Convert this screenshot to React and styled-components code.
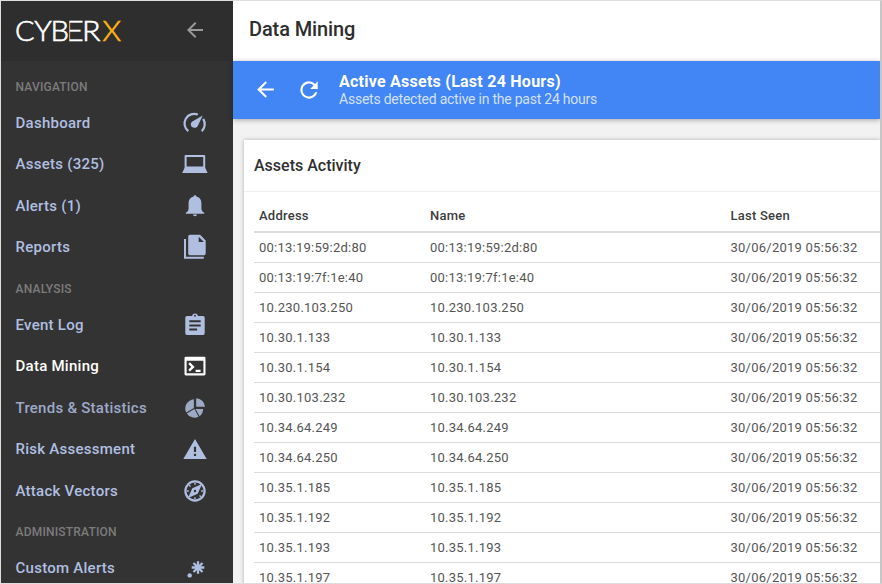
import React from "react";
import styled, { createGlobalStyle } from "styled-components";

const GlobalStyle = createGlobalStyle`
  * { box-sizing: border-box; }
  html, body { margin: 0; padding: 0; overflow: hidden; }
  body { font-family: Roboto, "Liberation Sans", sans-serif; }
`;

const Frame = styled.div`
  display: flex;
  width: 882px;
  height: 584px;
  overflow: hidden;
  border: 1px solid #dedede;
  border-right: 2px solid #c6c6c6;
  background: #f2f2f2;
`;

const Sidebar = styled.aside`
  flex: none;
  width: 232px;
  background: #333333;
  overflow: hidden;
`;

const Brand = styled.div`
  display: flex;
  align-items: center;
  justify-content: space-between;
  height: 60px;
  padding: 0 26px 2px 14px;
  background: #2e2e2e;
`;

const SectionTitle = styled.div`
  height: ${(p) => (p.$first ? 41.4 : 36.4)}px;
  padding: ${(p) => (p.$first ? 18 : 12.8)}px 0 0 14.5px;
  color: #7c7c7c;
  font-size: 12px;
  font-weight: 500;
  line-height: 16px;
  letter-spacing: 0.2px;
`;

const NavItem = styled.div`
  display: flex;
  align-items: center;
  justify-content: space-between;
  height: 41.4px;
  padding: 0 25px 0 14.5px;
  color: ${(p) => (p.$active ? "#ffffff" : "#b0bfe0")};
  opacity: ${(p) => (p.$dim ? 0.85 : 1)};
  font-size: 15px;
  font-weight: 500;
  letter-spacing: 0.26px;
  white-space: nowrap;
`;

const NavIcon = styled.svg`
  display: block;
  flex: none;
  width: 26px;
  height: 26px;
  fill: currentColor;
`;

const ActionIcon = styled.svg`
  display: block;
  flex: none;
  width: ${(p) => p.$size}px;
  height: ${(p) => p.$size}px;
  margin-bottom: ${(p) => p.$lift || 0}px;
  fill: ${(p) => p.$color || "#ffffff"};
`;

const Logo = styled.svg`
  display: block;
  width: 112px;
  height: 40px;
  font-family: Lato, sans-serif;
  font-size: 28px;
  font-weight: 300;
`;

const Main = styled.main`
  flex: 1;
  min-width: 0;
  display: flex;
  flex-direction: column;
`;

const PageHeader = styled.header`
  flex: none;
  height: 60px;
  padding: 0 16px;
  background: #ffffff;
  color: #2e2e2e;
  font-size: 20px;
  font-weight: 500;
  line-height: 57px;
  letter-spacing: -0.12px;
`;

const ReportBar = styled.div`
  flex: none;
  display: flex;
  align-items: center;
  height: 58px;
  padding-left: 20px;
  background: #4285f4;
  box-shadow: 0 1px 5px rgba(0, 0, 0, 0.32);
  color: #ffffff;
`;

const ReportText = styled.div`
  margin-left: 17px;
`;

const ReportTitle = styled.div`
  font-size: 16px;
  font-weight: 700;
  line-height: 18px;
  letter-spacing: 0.25px;
`;

const ReportSubtitle = styled.div`
  color: #d2e1fc;
  font-size: 14px;
  line-height: 16px;
  letter-spacing: -0.23px;
`;

const Gap = styled.div`
  flex: none;
  width: ${(p) => p.$width}px;
`;

const Content = styled.section`
  flex: 1;
  min-height: 0;
  padding: 20.5px 0 0 10.5px;
  overflow: hidden;
`;

const Card = styled.div`
  height: 600px;
  background: #ffffff;
  box-shadow: 0 0 4px rgba(0, 0, 0, 0.28);
`;

const CardTitle = styled.h2`
  height: 52.5px;
  margin: 0;
  padding-left: 10.5px;
  border-bottom: 1px solid #eeeeee;
  color: #2f2f2f;
  font-size: 16px;
  font-weight: 500;
  line-height: 52px;
`;

const Table = styled.div`
  margin-left: 10.5px;
  padding-top: 9px;
`;

const Row = styled.div`
  display: grid;
  grid-template-columns: 171px 300.5px 1fr;
  height: 30px;
  padding-left: 5px;
  border-bottom: 1px solid #dcdcdc;
  color: #555555;
  font-size: 13px;
  line-height: 29px;
  letter-spacing: 0.24px;
`;

const HeaderRow = styled(Row)`
  height: 32px;
  border-bottom: 2px solid #dcdcdc;
  color: #3c3c3c;
  font-weight: 500;
  line-height: 30px;
`;

const ICONS = {
  gauge: (
    <>
      <path d="M15.8 4.6A9.6 9.6 0 0 0 6.3 21.1M21.2 8.9A9.6 9.6 0 0 1 19.7 21.1" fill="none" stroke="currentColor" strokeWidth="2.2" />
      <path d="M20.7 5.4 10.4 11.5C7.6 13.4 8.6 17.8 12.4 17.8c1.8 0 3-.9 3.6-2.3z" />
    </>
  ),
  laptop: (
    <path fillRule="evenodd" d="M3.6 4h18.6q1 0 1 1v11.8L25.6 22H.2L2.6 16.8V5q0-1 1-1zM4.6 6v9.5h16.6V6z" />
  ),
  bell: (
    <path d="M13 2.2c.9 0 1.4.6 1.4 1.4 3.6.8 5 3.6 5 6.8v5.2c0 2 1.1 3.2 2.8 4.2v1H3.8v-1c1.7-1 2.8-2.2 2.8-4.2v-5.2c0-3.2 1.4-6 5-6.8 0-.8.5-1.4 1.4-1.4zM11 21.6h4c0 2.1-4 2.1-4 0z" />
  ),
  files: (
    <>
      <path d="M3 5v18.7h18.8" fill="none" stroke="currentColor" strokeWidth="2" />
      <path fillRule="evenodd" d="M8 .8h10.1l5.6 5.8v12.9q0 1.8-1.8 1.8H8q-1.8 0-1.8-1.8V2.6Q6.2.8 8 .8zM16.7 2.7v5.4h5.2z" />
    </>
  ),
  clipboard: (
    <path fillRule="evenodd" d="M5 3.9h5a3.1 3.1 0 0 1 6 0h5q1.7 0 1.7 1.7v15.6q0 1.7-1.7 1.7H5q-1.7 0-1.7-1.7V5.6Q3.3 3.9 5 3.9zM13 2.8a.9.9 0 1 0 0 1.9.9.9 0 0 0 0-1.9zM7.3 8.2v2h11.4v-2zM7.3 12.4v2h11.4v-2zM7.3 16.5v2h7.8v-2z" />
  ),
  terminal: (
    <>
      <path fillRule="evenodd" d="M3.8 3.8h18.4q1.3 0 1.3 1.3v16q0 1.3-1.3 1.3H3.8q-1.3 0-1.3-1.3v-16q0-1.3 1.3-1.3zM4.6 7.7v12.5h16.8V7.7z" />
      <path d="M7.1 10.2 11 13.9l-3.9 3.7M13.6 17.9h5" fill="none" stroke="currentColor" strokeWidth="2.3" />
    </>
  ),
  pie: (
    <>
      <path d="M14.2 3.2a9.5 9.5 0 0 1 8.9 8.5h-8.9z" />
      <path d="M11.9 4.3v8.8L4.2 17.5A9.2 9.2 0 0 1 11.9 4.3z" />
      <path d="m12.4 14.1 4.2 7.7a9.3 9.3 0 0 1-11.8-3.3z" />
      <path d="M13.5 13.9h7.6a9.2 9.2 0 0 1-3.5 7.3z" />
    </>
  ),
  warning: <path fillRule="evenodd" d="M13 3.1 24.7 22.9H1.3zM11.9 10.8v5.3h2.2v-5.3zM11.9 17.8v2.2h2.2v-2.2z" />,
  compass: (
    <>
      <circle cx="13" cy="13" r="9.6" fill="none" stroke="currentColor" strokeWidth="2.2" />
      <path fillRule="evenodd" d="M20 6 15.7 15.7 6 20 10.3 10.3zM13 11.8a1.2 1.2 0 1 0 0 2.4 1.2 1.2 0 0 0 0-2.4z" />
      <path d="M13 4.7v2M13 19.3v2M4.8 13h2M19.2 13h2M7.2 7.2l1.3 1.3M17.5 17.5l1.3 1.3" fill="none" stroke="currentColor" strokeWidth="1.4" />
    </>
  ),
  spark: (
    <>
      <path d="M16 6.2v12.6M9.7 12.5h12.6M11.5 8l9 9M20.5 8l-9 9" fill="none" stroke="currentColor" strokeWidth="2.3" />
      <circle cx="7.7" cy="20.4" r="2.2" />
    </>
  ),
};

const SECTIONS = [
  {
    title: "NAVIGATION",
    items: [
      { label: "Dashboard", icon: "gauge" },
      { label: "Assets (325)", icon: "laptop" },
      { label: "Alerts (1)", icon: "bell" },
      { label: "Reports", icon: "files" },
    ],
  },
  {
    title: "ANALYSIS",
    items: [
      { label: "Event Log", icon: "clipboard" },
      { label: "Data Mining", icon: "terminal", active: true },
      { label: "Trends & Statistics", icon: "pie", dim: true },
      { label: "Risk Assessment", icon: "warning" },
      { label: "Attack Vectors", icon: "compass" },
    ],
  },
  { title: "ADMINISTRATION", items: [{ label: "Custom Alerts", icon: "spark" }] },
];

const ADDRESSES = [
  "00:13:19:59:2d:80",
  "00:13:19:7f:1e:40",
  "10.230.103.250",
  "10.30.1.133",
  "10.30.1.154",
  "10.30.103.232",
  "10.34.64.249",
  "10.34.64.250",
  "10.35.1.185",
  "10.35.1.192",
  "10.35.1.193",
  "10.35.1.197",
];

const ARROW = "M20 11H7.83l5.59-5.59L12 4l-8 8 8 8 1.41-1.41L7.83 13H20z";
const REFRESH =
  "M17.65 6.35A7.96 7.96 0 0 0 12 4a8 8 0 1 0 7.73 10h-2.08A6 6 0 1 1 12 6c1.66 0 3.14.69 4.22 1.78L13 11h7V4z";

function CyberLogo() {
  return (
    <Logo viewBox="15 10 112 40">
      <g fill="#ffffff" stroke="#ffffff" strokeWidth="0.6">
        <text y="40.8">
          <tspan x="15" textLength="19.5" lengthAdjust="spacingAndGlyphs">C</tspan>
          <tspan x="34.3" textLength="17.5" lengthAdjust="spacingAndGlyphs">Y</tspan>
          <tspan x="50.5" textLength="18.5" lengthAdjust="spacingAndGlyphs">B</tspan>
        </text>
        <text x="82" y="40.8" textLength="18.5" lengthAdjust="spacingAndGlyphs">R</text>
        <svg x="69.4" y="10" width="13.4" height="40" viewBox="69.4 10 13.4 40">
          <text x="64" y="40.8" textLength="20" lengthAdjust="spacingAndGlyphs">E</text>
        </svg>
      </g>
      <text x="102.5" y="40.8" textLength="18.5" lengthAdjust="spacingAndGlyphs" fill="#fbb116" stroke="#fbb116" strokeWidth="0.7">X</text>
    </Logo>
  );
}

export default function App() {
  return (
    <>
      <GlobalStyle />
      <Frame>
        <Sidebar>
          <Brand>
            <CyberLogo />
            <ActionIcon viewBox="0 0 24 24" $size={24} $color="#999999">
              <path d={ARROW} />
            </ActionIcon>
          </Brand>
          {SECTIONS.map((section, i) => (
            <React.Fragment key={section.title}>
              <SectionTitle $first={i === 0}>{section.title}</SectionTitle>
              {section.items.map((item) => (
                <NavItem key={item.label} $active={item.active} $dim={item.dim}>
                  {item.label}
                  <NavIcon viewBox="0 0 26 26">{ICONS[item.icon]}</NavIcon>
                </NavItem>
              ))}
            </React.Fragment>
          ))}
        </Sidebar>
        <Main>
          <PageHeader>Data Mining</PageHeader>
          <ReportBar>
            <ActionIcon viewBox="0 0 24 24" $size={25} $lift={2}>
              <path d={ARROW} />
            </ActionIcon>
            <Gap $width={18} />
            <ActionIcon viewBox="0 0 24 24" $size={26}>
              <path d={REFRESH} />
            </ActionIcon>
            <ReportText>
              <ReportTitle>Active Assets (Last 24 Hours)</ReportTitle>
              <ReportSubtitle>Assets detected active in the past 24 hours</ReportSubtitle>
            </ReportText>
          </ReportBar>
          <Content>
            <Card>
              <CardTitle>Assets Activity</CardTitle>
              <Table>
                <HeaderRow>
                  <span>Address</span>
                  <span>Name</span>
                  <span>Last Seen</span>
                </HeaderRow>
                {ADDRESSES.map((address) => (
                  <Row key={address}>
                    <span>{address}</span>
                    <span>{address}</span>
                    <span>30/06/2019 05:56:32</span>
                  </Row>
                ))}
              </Table>
            </Card>
          </Content>
        </Main>
      </Frame>
    </>
  );
}
